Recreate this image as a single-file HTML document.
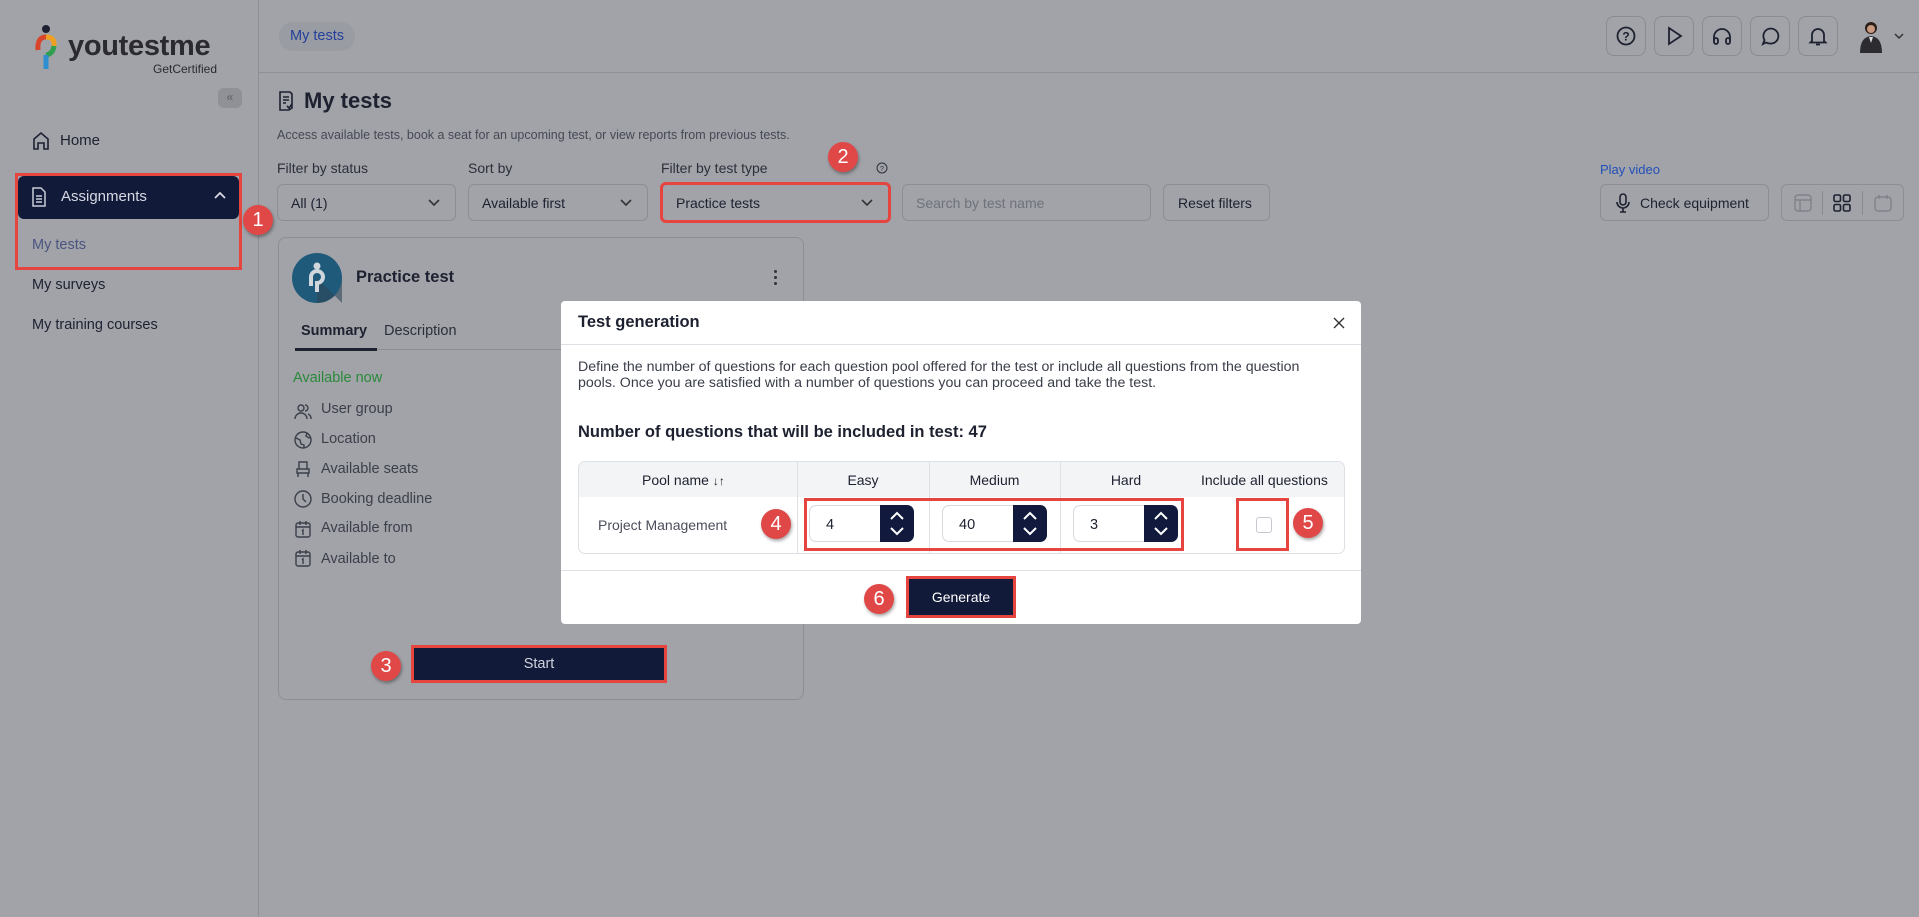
<!DOCTYPE html>
<html><head><meta charset="utf-8"><style>
*{box-sizing:border-box;margin:0;padding:0}
body{width:1919px;height:917px;overflow:hidden;background:#a1a3a8;font-family:"Liberation Sans",sans-serif;color:#1d2130;position:relative}
.a{position:absolute}
.side{left:0;top:0;width:259px;height:917px;border-right:1px solid #8e9096}
.top{left:259px;top:0;right:0;height:73px;border-bottom:1px solid #8e9096}
.ib{width:40px;height:40px;border:1px solid #8a8c92;border-radius:8px;top:16px;display:flex;align-items:center;justify-content:center}
.sel{height:37px;border:1px solid #8c8e94;border-radius:6px;top:184px;font-size:14px;display:flex;align-items:center;padding-left:13px}
.lab{top:160px;font-size:14px;color:#2b2f3a}
.chev{position:absolute;right:14px;top:11px}
.badge{width:30px;height:30px;border-radius:50%;background:#e04848;color:#fff;font-size:20px;display:flex;align-items:center;justify-content:center;box-shadow:1px 2px 3px rgba(0,0,0,.35)}
.red{border:3px solid #e5443f}
.it{font-size:14.5px;color:#3b3f4a;left:321px}
.ic{left:294px}
.num{position:absolute;top:505px;width:105px;height:37px;border:1px solid #d6d9de;border-radius:7px;background:#fff;font-size:14.5px;padding:11px 0 0 16px}
.spin{position:absolute;right:-1px;top:-1px;width:34px;height:37px;background:#111a3d;border-radius:0 7px 7px 0}
</style></head><body>
<div class="a side"></div>
<svg class="a" style="left:34px;top:24px" width="24" height="48" viewBox="0 0 24 48"><circle cx="12" cy="5" r="4" fill="#1d2130"/><path d="M4 26 Q3 13 12 13" stroke="#d9452a" stroke-width="5" fill="none"/><path d="M12 13 Q21 13 20 22" stroke="#f0a020" stroke-width="5" fill="none"/><path d="M20 22 Q19 30 12 31" stroke="#2f9e4f" stroke-width="5" fill="none"/><path d="M12 31 L12 45" stroke="#2d8fd0" stroke-width="5" fill="none"/></svg>
<div class="a" style="left:68px;top:30px;font-size:29px;font-weight:bold;color:#2a2a30;letter-spacing:-.3px">youtestme</div>
<div class="a" style="left:153px;top:62px;font-size:12px;color:#2a2a30">GetCertified</div>
<div class="a" style="left:218px;top:88px;width:24px;height:20px;border-radius:6px;background:#8f9197;color:#5a5d66;font-size:12px;text-align:center;line-height:19px">«</div>
<svg class="a" style="left:31px;top:131px" width="20" height="20" viewBox="0 0 20 20" fill="none" stroke="#1d2130" stroke-width="1.6"><path d="M3 18V8l7-6 7 6v10h-4v-6H7v6z"/></svg>
<div class="a" style="left:60px;top:132px;font-size:15px">Home</div>
<div class="a red" style="left:15px;top:173px;width:227px;height:97px"></div>
<div class="a" style="left:18px;top:176px;width:221px;height:43px;background:#121a3a;border-radius:6px"></div>
<svg class="a" style="left:31px;top:187px" width="16" height="20" viewBox="0 0 16 20" fill="none" stroke="#c8ccd6" stroke-width="1.5"><path d="M2 1h8l4 4v14H2z M5 9h6 M5 12h6 M5 15h6"/></svg>
<div class="a" style="left:61px;top:188px;font-size:15px;color:#d6d9e2">Assignments</div>
<svg class="a" style="left:213px;top:190px" width="14" height="10" viewBox="0 0 14 10" fill="none" stroke="#d6d9e2" stroke-width="1.8"><path d="M2 8l5-5 5 5"/></svg>
<div class="a" style="left:32px;top:237px;font-size:14.5px;color:#4b5580">My tests</div>
<div class="a badge" style="left:243px;top:205px">1</div>
<div class="a" style="left:32px;top:277px;font-size:14.5px">My surveys</div>
<div class="a" style="left:32px;top:317px;font-size:14.5px">My training courses</div>
<div class="a top"></div>
<div class="a" style="left:279px;top:22px;width:76px;height:29px;border-radius:14px;background:#9a9ca4;color:#23409a;font-size:14.5px;text-align:center;line-height:29px">My tests</div>
<div class="a ib" style="left:1606px"><svg width="22" height="22" viewBox="0 0 22 22" fill="none" stroke="#1d2130" stroke-width="1.8"><circle cx="11" cy="11" r="8.5"/><text x="11" y="15.5" font-size="12" font-weight="bold" text-anchor="middle" fill="#1d2130" stroke="none" font-family="Liberation Sans">?</text></svg></div>
<div class="a ib" style="left:1654px"><svg width="22" height="22" viewBox="0 0 22 22" fill="none" stroke="#1d2130" stroke-width="1.8"><path d="M6 3l12 8-12 8z"/></svg></div>
<div class="a ib" style="left:1702px"><svg width="22" height="22" viewBox="0 0 22 22" fill="none" stroke="#1d2130" stroke-width="1.8"><path d="M3 16v-4a8 8 0 0116 0v4"/><rect x="3" y="13" width="4" height="6" rx="2"/><rect x="15" y="13" width="4" height="6" rx="2"/></svg></div>
<div class="a ib" style="left:1750px"><svg width="22" height="22" viewBox="0 0 22 22" fill="none" stroke="#1d2130" stroke-width="1.8"><path d="M4 19l1.5-4A7.5 7.5 0 1111 18.5 7.5 7.5 0 017 17.5z"/></svg></div>
<div class="a ib" style="left:1798px"><svg width="22" height="22" viewBox="0 0 22 22" fill="none" stroke="#1d2130" stroke-width="1.8"><path d="M5 16V10a6 6 0 0112 0v6l1.5 1.5h-15z M9 19.5h4"/></svg></div>
<svg class="a" style="left:1858px;top:19px" width="26" height="34" viewBox="0 0 26 34"><circle cx="13" cy="9" r="6" fill="#2a1f1a"/><circle cx="13" cy="10" r="4" fill="#c89a80"/><path d="M2 34 Q2 18 13 17 Q24 18 24 34z" fill="#2b2b30"/><path d="M11 18l2 6 2-6z" fill="#ddd"/></svg>
<svg class="a" style="left:1894px;top:33px" width="10" height="7" viewBox="0 0 10 7" fill="none" stroke="#333" stroke-width="1.5"><path d="M1 1l4 4 4-4"/></svg>
<svg class="a" style="left:278px;top:91px" width="16" height="20" viewBox="0 0 16 20" fill="none" stroke="#1d2130" stroke-width="1.6"><path d="M2 1h10l2 2v14l-3 2H2z M5 6h6 M5 9h6 M5 12h3 M9 15l2 2 3-4"/></svg>
<div class="a" style="left:304px;top:88px;font-size:22px;font-weight:bold">My tests</div>
<div class="a" style="left:277px;top:128px;font-size:12.5px;color:#454955">Access available tests, book a seat for an upcoming test, or view reports from previous tests.</div>
<div class="a lab" style="left:277px">Filter by status</div>
<div class="a lab" style="left:468px">Sort by</div>
<div class="a lab" style="left:661px">Filter by test type</div>
<svg class="a" style="left:876px;top:162px" width="12" height="12" viewBox="0 0 12 12" fill="none" stroke="#2b2f3a" stroke-width="1"><circle cx="6" cy="6" r="5"/><text x="6" y="9" font-size="7" text-anchor="middle" fill="#2b2f3a" stroke="none" font-family="Liberation Sans">?</text></svg>
<div class="a badge" style="left:828px;top:142px">2</div>
<div class="a sel" style="left:277px;width:179px">All (1)<svg class="chev" width="14" height="14" viewBox="0 0 14 14" fill="none" stroke="#333" stroke-width="1.6"><path d="M2 4l5 5 5-5"/></svg></div>
<div class="a sel" style="left:468px;width:180px">Available first<svg class="chev" width="14" height="14" viewBox="0 0 14 14" fill="none" stroke="#333" stroke-width="1.6"><path d="M2 4l5 5 5-5"/></svg></div>
<div class="a sel red" style="left:660px;width:231px;top:182px;height:41px">Practice tests<svg class="chev" width="14" height="14" viewBox="0 0 14 14" fill="none" stroke="#333" stroke-width="1.6"><path d="M2 4l5 5 5-5"/></svg></div>
<div class="a sel" style="left:902px;width:249px;color:#6f727b">Search by test name</div>
<div class="a sel" style="left:1163px;width:107px;padding-left:14px">Reset filters</div>
<div class="a" style="left:1600px;top:162px;font-size:13px;color:#2150b8">Play video</div>
<div class="a sel" style="left:1600px;width:169px;padding-left:14px"><svg width="16" height="20" viewBox="0 0 16 20" fill="none" stroke="#1d2130" stroke-width="1.6" style="margin-right:9px"><rect x="5" y="1" width="6" height="11" rx="3"/><path d="M2 9a6 6 0 0012 0 M8 15v4 M5 19h6"/></svg>Check equipment</div>
<div class="a sel" style="left:1781px;width:123px;padding:0">
<svg style="position:absolute;left:12px;top:9px" width="18" height="18" viewBox="0 0 18 18" fill="none" stroke="#7f828a" stroke-width="1.4"><rect x="1" y="1" width="16" height="16" rx="3"/><path d="M1 6h16 M6 6v11"/></svg>
<div style="position:absolute;left:40px;top:6px;width:1px;height:24px;background:#888a90"></div>
<svg style="position:absolute;left:51px;top:9px" width="18" height="18" viewBox="0 0 18 18" fill="none" stroke="#1d2130" stroke-width="1.6"><rect x="1" y="1" width="6.5" height="6.5" rx="1.5"/><rect x="10.5" y="1" width="6.5" height="6.5" rx="1.5"/><rect x="1" y="10.5" width="6.5" height="6.5" rx="1.5"/><rect x="10.5" y="10.5" width="6.5" height="6.5" rx="1.5"/></svg>
<div style="position:absolute;left:80px;top:6px;width:1px;height:24px;background:#888a90"></div>
<svg style="position:absolute;left:92px;top:9px" width="18" height="18" viewBox="0 0 18 18" fill="none" stroke="#7f828a" stroke-width="1.4"><rect x="1" y="3" width="16" height="14" rx="3"/><path d="M5 1v4 M13 1v4"/></svg></div>
<div class="a" style="left:278px;top:237px;width:526px;height:463px;border:1px solid #8c8e94;border-radius:8px"></div>
<svg class="a" style="left:292px;top:253px" width="50" height="50" viewBox="0 0 50 50"><circle cx="25" cy="25" r="25" fill="#1f5a7a"/><path d="M25 25 L50 50 L50 25 A25 25 0 0 1 25 50z" fill="#2d4656" opacity=".6"/><circle cx="25" cy="13" r="3.5" fill="#cfd6dc"/><path d="M19 33v-9a6 6 0 0112 0 6 6 0 01-6 6v9" stroke="#cfd6dc" stroke-width="4" fill="none"/></svg>
<div class="a" style="left:356px;top:268px;font-size:16.5px;font-weight:bold">Practice test</div>
<div class="a" style="left:774px;top:270px;width:4px;font-size:0"><div style="width:3px;height:3px;background:#333;border-radius:50%;margin-bottom:3px"></div><div style="width:3px;height:3px;background:#333;border-radius:50%;margin-bottom:3px"></div><div style="width:3px;height:3px;background:#333;border-radius:50%"></div></div>
<div class="a" style="left:301px;top:323px;font-size:14.5px;font-weight:bold">Summary</div>
<div class="a" style="left:384px;top:323px;font-size:14.5px;color:#2b2f3a">Description</div>
<div class="a" style="left:295px;top:349px;width:508px;height:1px;background:#8c8e94"></div>
<div class="a" style="left:295px;top:348px;width:82px;height:3px;background:#1d2130"></div>
<div class="a" style="left:293px;top:370px;font-size:14.5px;color:#2a8a3a">Available now</div>
<svg class="a ic" style="top:402px" width="18" height="18" viewBox="0 0 18 18" fill="none" stroke="#3b3f4a" stroke-width="1.4"><circle cx="7" cy="6" r="3"/><path d="M1 17a6 6 0 0112 0 M11 3a3 3 0 010 6 M14 12a5 5 0 013 5"/></svg><div class="a it" style="top:401px">User group</div>
<svg class="a ic" style="top:431px" width="18" height="18" viewBox="0 0 18 18" fill="none" stroke="#3b3f4a" stroke-width="1.4"><circle cx="9" cy="9" r="8"/><path d="M2 7l4 2 1 4 3 1v3 M13 2l-1 3 3 2 2-1"/></svg><div class="a it" style="top:431px">Location</div>
<svg class="a ic" style="top:460px" width="18" height="18" viewBox="0 0 18 18" fill="none" stroke="#3b3f4a" stroke-width="1.4"><path d="M5 9V2h8v7 M3 9h12v4H3z M4 13v4 M14 13v4"/></svg><div class="a it" style="top:461px">Available seats</div>
<svg class="a ic" style="top:490px" width="18" height="18" viewBox="0 0 18 18" fill="none" stroke="#3b3f4a" stroke-width="1.4"><circle cx="9" cy="9" r="8"/><path d="M9 4v5l3 3"/></svg><div class="a it" style="top:491px">Booking deadline</div>
<svg class="a ic" style="top:520px" width="18" height="18" viewBox="0 0 18 18" fill="none" stroke="#3b3f4a" stroke-width="1.4"><rect x="2" y="3" width="14" height="14" rx="2"/><path d="M2 7h14 M6 1v4 M12 1v4 M8 11l1-1v5"/></svg><div class="a it" style="top:520px">Available from</div>
<svg class="a ic" style="top:549px" width="18" height="18" viewBox="0 0 18 18" fill="none" stroke="#3b3f4a" stroke-width="1.4"><rect x="2" y="3" width="14" height="14" rx="2"/><path d="M2 7h14 M6 1v4 M12 1v4 M8 11l1-1v5"/></svg><div class="a it" style="top:551px">Available to</div>
<div class="a red" style="left:411px;top:645px;width:256px;height:38px;background:#121a3a;color:#cfd3dc;font-size:14.5px;text-align:center;line-height:32px">Start</div>
<div class="a badge" style="left:371px;top:651px">3</div>
<div class="a" style="left:561px;top:301px;width:800px;height:323px;background:#fff;border-radius:4px"></div>
<div class="a" style="left:578px;top:313px;font-size:16.5px;font-weight:bold">Test generation</div>
<svg class="a" style="left:1332px;top:316px" width="14" height="14" viewBox="0 0 14 14" stroke="#333" stroke-width="1.4"><path d="M2 2l10 10 M12 2L2 12"/></svg>
<div class="a" style="left:561px;top:344px;width:800px;height:1px;background:#dde0e5"></div>
<div class="a" style="left:578px;top:359px;width:755px;font-size:14.2px;line-height:16px;color:#3a3e49">Define the number of questions for each question pool offered for the test or include all questions from the question pools. Once you are satisfied with a number of questions you can proceed and take the test.</div>
<div class="a" style="left:578px;top:423px;font-size:16.5px;font-weight:bold">Number of questions that will be included in test: 47</div>
<div class="a" style="left:578px;top:461px;width:767px;height:93px;border:1px solid #dde0e5;border-radius:7px;overflow:hidden">
<div style="position:absolute;left:0;top:0;width:767px;height:35px;background:#f3f4f6"></div>
<div style="position:absolute;left:218px;top:0;width:1px;height:93px;background:#dde0e5"></div>
<div style="position:absolute;left:350px;top:0;width:1px;height:93px;background:#dde0e5"></div>
<div style="position:absolute;left:481px;top:0;width:1px;height:93px;background:#dde0e5"></div>
<div style="position:absolute;left:63px;top:10px;font-size:14px">Pool name <span style="font-size:12px">↓↑</span></div>
<div style="position:absolute;left:218px;width:132px;top:10px;font-size:14px;text-align:center">Easy</div>
<div style="position:absolute;left:350px;width:131px;top:10px;font-size:14px;text-align:center">Medium</div>
<div style="position:absolute;left:481px;width:132px;top:10px;font-size:14px;text-align:center">Hard</div>
<div style="position:absolute;left:622px;top:10px;font-size:14px">Include all questions</div>
<div style="position:absolute;left:19px;top:55px;font-size:14px;color:#4a4e59">Project Management</div>
<div style="position:absolute;left:677px;top:55px;width:16px;height:16px;border:1px solid #c5c8ce;border-radius:3px"></div>
</div>
<div class="num" style="left:809px">4<div class="spin"><svg width="34" height="37" viewBox="0 0 34 37" fill="none" stroke="#fff" stroke-width="2"><path d="M11 14l6-6 6 6 M11 23l6 6 6-6"/></svg></div></div>
<div class="num" style="left:942px">40<div class="spin"><svg width="34" height="37" viewBox="0 0 34 37" fill="none" stroke="#fff" stroke-width="2"><path d="M11 14l6-6 6 6 M11 23l6 6 6-6"/></svg></div></div>
<div class="num" style="left:1073px">3<div class="spin"><svg width="34" height="37" viewBox="0 0 34 37" fill="none" stroke="#fff" stroke-width="2"><path d="M11 14l6-6 6 6 M11 23l6 6 6-6"/></svg></div></div>
<div class="a red" style="left:804px;top:498px;width:380px;height:53px"></div>
<div class="a red" style="left:1236px;top:498px;width:53px;height:53px"></div>
<div class="a badge" style="left:761px;top:509px">4</div>
<div class="a badge" style="left:1293px;top:508px">5</div>
<div class="a" style="left:561px;top:570px;width:800px;height:1px;background:#dde0e5"></div>
<div class="a red" style="left:906px;top:576px;width:110px;height:42px;background:#121a3a;color:#fff;font-size:14px;text-align:center;line-height:36px">Generate</div>
<div class="a badge" style="left:864px;top:584px">6</div>
</body></html>
